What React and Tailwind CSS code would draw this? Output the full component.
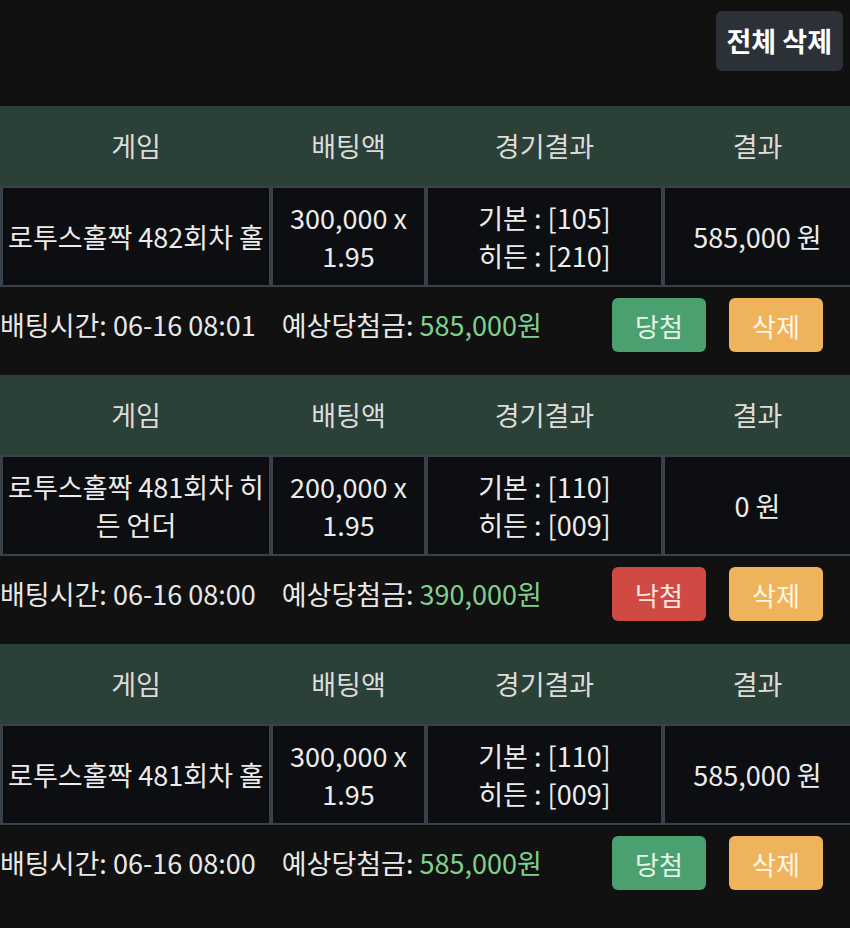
const bets = [
  {
    game: '로투스홀짝 482회차 홀',
    amount: '300,000 x',
    rate: '1.95',
    base: '[105]',
    hidden: '[210]',
    result: '585,000 원',
    time: '06-16 08:01',
    expected: '585,000원',
    win: true,
  },
  {
    game: '로투스홀짝 481회차 히든 언더',
    amount: '200,000 x',
    rate: '1.95',
    base: '[110]',
    hidden: '[009]',
    result: '0 원',
    time: '06-16 08:00',
    expected: '390,000원',
    win: false,
  },
  {
    game: '로투스홀짝 481회차 홀',
    amount: '300,000 x',
    rate: '1.95',
    base: '[110]',
    hidden: '[009]',
    result: '585,000 원',
    time: '06-16 08:00',
    expected: '585,000원',
    win: true,
  },
];

const cols = 'grid grid-cols-[266px_151px_233px_185px] gap-x-[4px] pl-[3px]';

function BetBlock({ bet }) {
  return (
    <div>
      {/* header */}
      <div className={`${cols} h-[80px] items-center bg-[#2b4036] text-[27px] text-[#dcdcdc]`}>
        <div className="text-center">게임</div>
        <div className="text-center">배팅액</div>
        <div className="text-center">경기결과</div>
        <div className="text-center">결과</div>
      </div>

      {/* row */}
      <div className={`${cols} h-[101px] bg-[#39414a] py-[2px] text-[27px] leading-[38px] text-[#ececec]`}>
        <div className="flex items-center justify-center break-all bg-[#0c0e11] px-[2px] text-center">{bet.game}</div>
        <div className="flex flex-col items-center justify-center bg-[#0c0e11]">
          <span>{bet.amount}</span>
          <span>{bet.rate}</span>
        </div>
        <div className="flex flex-col items-center justify-center bg-[#0c0e11]">
          <span>기본 : {bet.base}</span>
          <span>히든 : {bet.hidden}</span>
        </div>
        <div className="flex items-center justify-center bg-[#0c0e11]">{bet.result}</div>
      </div>

      {/* footer */}
      <div className="flex h-[88px] items-center pb-3 text-[27px] text-[#e8e8e8]">
        <span className="whitespace-nowrap">배팅시간: {bet.time}</span>
        <span className="ml-[26px] whitespace-nowrap">
          예상당첨금: <span className="text-[#7fd08e]">{bet.expected}</span>
        </span>
        <div className="ml-auto mr-[27px] flex gap-[23px]">
          {bet.win ? (
            <button className="h-[54px] w-[94px] rounded-[6px] bg-[#4aa06f] text-[26px] text-[#e6f4ea]">당첨</button>
          ) : (
            <button className="h-[54px] w-[94px] rounded-[6px] bg-[#cf4a42] text-[26px] text-[#fbe6e4]">낙첨</button>
          )}
          <button className="h-[54px] w-[94px] rounded-[6px] bg-[#efb35b] text-[26px] text-[#fff6e6]">삭제</button>
        </div>
      </div>
    </div>
  );
}

export default function App() {
  return (
    <div className="min-h-[928px] w-[850px] bg-[#111111] font-['Noto_Sans_CJK_KR','Noto_Sans',sans-serif]">
      <div className="flex h-[106px] items-start justify-end pt-[11px] pr-[7px]">
        <button className="h-[60px] rounded-[6px] bg-[#2c3137] px-[11px] text-[27px] font-bold text-white">
          전체 삭제
        </button>
      </div>
      {bets.map((bet, i) => (
        <BetBlock key={i} bet={bet} />
      ))}
    </div>
  );
}
